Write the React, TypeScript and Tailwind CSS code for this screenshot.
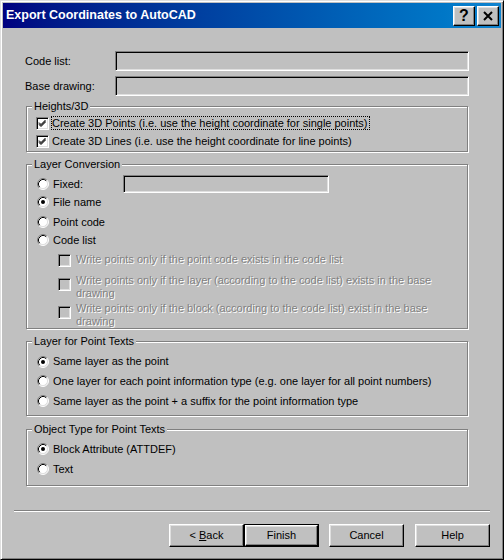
import React from 'react';

function Check({ checked = false, disabled = false }: { checked?: boolean; disabled?: boolean }) {
  return (
    <span
      className={`relative inline-block w-[13px] h-[13px] shrink-0 border border-t-[#808080] border-l-[#808080] border-r-white border-b-white shadow-[inset_1px_1px_#000,inset_-1px_-1px_#dfdfdf] ${disabled ? 'bg-[#c0c0c0]' : 'bg-white'}`}
    >
      {checked && (
        <svg width="11" height="11" viewBox="0 0 11 11" className="absolute left-0 top-0">
          <path d="M2 4.5 L4 6.5 L8.5 2 M2 5.5 L4 7.5 L8.5 3 M2 6.5 L4 8.5 L8.5 4" stroke="#000" strokeWidth="1" fill="none" />
        </svg>
      )}
    </span>
  );
}

function Radio({ checked = false }: { checked?: boolean }) {
  return (
    <svg width="12" height="12" viewBox="0 0 12 12" className="shrink-0">
      <circle cx="6" cy="6" r="5" fill="#fff" />
      <path d="M2.11 9.89 A5.5 5.5 0 0 1 9.89 2.11" stroke="#808080" fill="none" />
      <path d="M9.89 2.11 A5.5 5.5 0 0 1 2.11 9.89" stroke="#fff" fill="none" />
      <path d="M2.82 9.18 A4.5 4.5 0 0 1 9.18 2.82" stroke="#000" fill="none" />
      <path d="M9.18 2.82 A4.5 4.5 0 0 1 2.82 9.18" stroke="#dfdfdf" fill="none" />
      {checked && <circle cx="6" cy="6" r="2" fill="#000" />}
    </svg>
  );
}

function Field({ className = '' }: { className?: string }) {
  return (
    <div
      className={`bg-[#c0c0c0] border border-t-[#808080] border-l-[#808080] border-r-white border-b-white shadow-[inset_1px_1px_#000,inset_-1px_-1px_#dfdfdf] ${className}`}
    />
  );
}

function Group({ title, className = '', children }: { title: string; className?: string; children?: React.ReactNode }) {
  return (
    <div className={`relative ml-[1px] w-[442px] border border-[#808080] shadow-[1px_1px_0_#fff,inset_1px_1px_0_#fff] ${className}`}>
      <span className="absolute -top-[8px] left-[5px] bg-[#c0c0c0] px-[2px] leading-[14px]">{title}</span>
      {children}
    </div>
  );
}

function Btn({ children, isDefault = false, className = '' }: { children: React.ReactNode; isDefault?: boolean; className?: string }) {
  return (
    <div className={`w-[75px] h-[23px] flex ${isDefault ? 'border border-black' : ''} ${className}`}>
      <div className="flex-1 flex items-center justify-center border border-t-white border-l-white border-r-black border-b-black shadow-[inset_-1px_-1px_#808080,inset_1px_1px_#dfdfdf]">
        {children}
      </div>
    </div>
  );
}

function RadioRow({ label, checked, className = '' }: { label: string; checked?: boolean; className?: string }) {
  return (
    <div className={`flex items-center gap-[4px] ${className}`}>
      <Radio checked={checked} />
      <span>{label}</span>
    </div>
  );
}

function SubCheck({ lines, className = '' }: { lines: string[]; className?: string }) {
  return (
    <div className={`flex items-start pl-[21px] gap-[5px] ${className}`}>
      <span className={lines.length > 1 ? 'mt-[5px] flex' : 'mt-[2px] flex'}>
        <Check disabled />
      </span>
      <div className="text-[#808080] [text-shadow:1px_1px_0_#fff] leading-[13px] pt-[1px]">
        {lines.map(l => (
          <div key={l}>{l}</div>
        ))}
      </div>
    </div>
  );
}

export default function App() {
  return (
    <div className="w-[504px] h-[560px] bg-[#c0c0c0] border border-t-[#dfdfdf] border-l-[#dfdfdf] border-r-black border-b-black shadow-[inset_1px_1px_#fff,inset_-1px_-1px_#808080] p-[2px] flex flex-col text-[11px] text-black font-['Tahoma','Liberation_Sans',Arial,sans-serif] overflow-hidden">
      <div className="h-[25px] shrink-0 flex items-center justify-between bg-linear-to-r from-[#000080] to-[#1084d0] pl-[3px] pr-[2px]">
        <span className="text-white font-bold text-[12.5px]">Export Coordinates to AutoCAD</span>
        <div className="flex gap-[2px]">
          <div className="w-[22px] h-[20px] bg-[#c0c0c0] border border-t-white border-l-white border-r-black border-b-black shadow-[inset_-1px_-1px_#808080,inset_1px_1px_#dfdfdf] flex items-center justify-center font-bold text-[16px] leading-none">?</div>
          <div className="w-[22px] h-[20px] bg-[#c0c0c0] border border-t-white border-l-white border-r-black border-b-black shadow-[inset_-1px_-1px_#808080,inset_1px_1px_#dfdfdf] flex items-center justify-center">
            <svg width="10" height="10" viewBox="0 0 10 10">
              <path d="M1 1 L9 9 M9 1 L1 9" stroke="#000" strokeWidth="2" />
            </svg>
          </div>
        </div>
      </div>

      <div className="flex flex-col pl-[22px]">
        <div className="mt-[23px] flex items-center h-[20px]">
          <span className="w-[90px]">Code list:</span>
          <Field className="w-[354px] h-[20px]" />
        </div>
        <div className="mt-[5px] flex items-center h-[20px]">
          <span className="w-[90px]">Base drawing:</span>
          <Field className="w-[354px] h-[20px]" />
        </div>

        <Group title="Heights/3D" className="mt-[10px] h-[46px] pt-[7px] pl-[9px]">
          <div className="flex items-center h-[18px] gap-[2px]">
            <Check checked />
            <span className="border border-dotted border-black leading-[12px] pr-[1px]">Create 3D Points (i.e. use the height coordinate for single points)</span>
          </div>
          <div className="flex items-center h-[18px] gap-[2px]">
            <Check checked />
            <span className="border border-transparent leading-[12px]">Create 3D Lines (i.e. use the height coordinate for line points)</span>
          </div>
        </Group>

        <Group title="Layer Conversion" className="mt-[12px] h-[165px] pt-[10px] pl-[10px]">
          <div className="flex items-center h-[18px]">
            <div className="flex items-center gap-[4px] w-[86px]">
              <Radio />
              <span>Fixed:</span>
            </div>
            <Field className="w-[206px] h-[18px]" />
          </div>
          <RadioRow label="File name" checked className="h-[18px]" />
          <RadioRow label="Point code" className="h-[18px] mt-[2px]" />
          <RadioRow label="Code list" className="h-[18px]" />
          <SubCheck className="mt-[3px] h-[18px]" lines={['Write points only if the point code exists in the code list']} />
          <SubCheck
            className="mt-[3px]"
            lines={['Write points only if the layer (according to the code list) exists in the base', 'drawing']}
          />
          <SubCheck
            className="mt-[1px]"
            lines={['Write points only if the block (according to the code list) exist in the base', 'drawing']}
          />
        </Group>

        <Group title="Layer for Point Texts" className="mt-[12px] h-[75px] pt-[10px] pl-[10px]">
          <RadioRow label="Same layer as the point" checked className="h-[19px]" />
          <RadioRow label="One layer for each point information type (e.g. one layer for all point numbers)" className="h-[20px]" />
          <RadioRow label="Same layer as the point + a suffix for the point information type" className="h-[20px]" />
        </Group>

        <Group title="Object Type for Point Texts" className="mt-[13px] h-[57px] pt-[9px] pl-[10px]">
          <RadioRow label="Block Attribute (ATTDEF)" checked className="h-[20px]" />
          <RadioRow label="Text" className="h-[20px]" />
        </Group>
      </div>

      <div className="mt-[24px] mx-[11px] h-[2px] border-t border-t-[#808080] border-b border-b-white" />

      <div className="mt-[12px] flex justify-end pr-[11px]">
        <Btn>
          &lt; <span className="underline ml-[3px]">B</span>ack
        </Btn>
        <Btn isDefault>Finish</Btn>
        <Btn className="ml-[10px]">Cancel</Btn>
        <Btn className="ml-[11px]">Help</Btn>
      </div>
    </div>
  );
}
